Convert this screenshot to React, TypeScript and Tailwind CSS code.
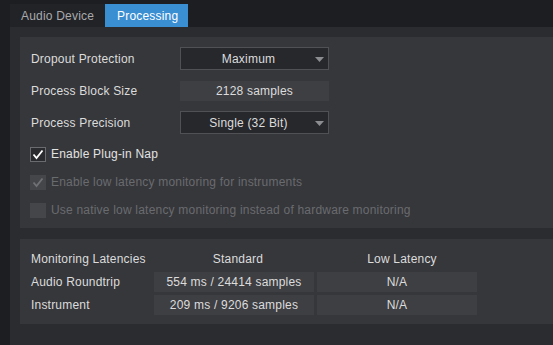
import React from "react";

const font = { fontFamily: '"Liberation Sans", Arial, sans-serif' };

function Arrow() {
  return (
    <svg width="9" height="5" viewBox="0 0 9 5" className="absolute right-[4px] top-[9px]">
      <polygon points="0,0 9,0 4.5,5" fill="#8c8d91" />
    </svg>
  );
}

function Dropdown({ value }: { value: string }) {
  return (
    <div className="relative w-[149px] h-[23px] bg-[#27282c] border border-[#505155] flex items-center justify-center pr-[12px] text-[12px] text-[#dcdcdc]">
      <span>{value}</span>
      <Arrow />
    </div>
  );
}

function Check({ color }: { color: string }) {
  return (
    <svg width="12" height="11" viewBox="0 0 12 11">
      <polyline points="1.5,5.5 4.5,9 10.5,1.5" fill="none" stroke={color} strokeWidth="1.8" />
    </svg>
  );
}

function CheckRow({
  label,
  checked,
  disabled,
}: {
  label: string;
  checked: boolean;
  disabled?: boolean;
}) {
  return (
    <div className="h-[28px] flex items-center pl-[10px]">
      <div
        className={
          disabled
            ? "w-[16px] h-[15px] bg-[#45464a] flex items-center justify-center"
            : "w-[16px] h-[15px] bg-[#2a2b2f] border border-[#6a6b6f] flex items-center justify-center"
        }
      >
        {checked && <Check color={disabled ? "#707175" : "#ffffff"} />}
      </div>
      <span
        className={
          disabled
            ? "ml-[5px] text-[12px] text-[#6a6b6f]"
            : "ml-[5px] text-[12px] text-[#e2e2e2]"
        }
      >
        {label}
      </span>
    </div>
  );
}

export default function App() {
  return (
    <div className="w-[553px] h-[345px] bg-[#1d1e21] overflow-hidden tracking-[0.2px]" style={font}>
      <div className="ml-[10px] h-[345px] flex flex-col">
        <div className="h-[27px] flex items-end">
          <div className="h-[23px] w-[95px] bg-[#222327] flex items-center pl-[11px] text-[12px] text-[#a9aaad]">
            Audio Device
          </div>
          <div className="h-[23px] w-[83px] bg-[#3a8ed2] flex items-center pl-[12px] text-[12px] text-[#ffffff]">
            Processing
          </div>
        </div>
        <div className="flex-1 bg-[#2b2c30] pl-[10px] pt-[10px]">
          <div className="h-[191px] bg-[#36373b] pt-[10px] flex flex-col">
            <div className="h-[23px] flex items-center pl-[11px]">
              <div className="w-[149px] text-[12px] text-[#dcdcdc]">Dropout Protection</div>
              <Dropdown value="Maximum" />
            </div>
            <div className="h-[20px] mt-[11px] flex items-center pl-[11px]">
              <div className="w-[149px] text-[12px] text-[#dcdcdc]">Process Block Size</div>
              <div className="w-[149px] h-[20px] bg-[#3e3f43] flex items-center justify-center text-[12px] text-[#dcdcdc]">
                2128 samples
              </div>
            </div>
            <div className="h-[23px] mt-[10px] flex items-center pl-[11px]">
              <div className="w-[149px] text-[12px] text-[#dcdcdc]">Process Precision</div>
              <Dropdown value="Single (32 Bit)" />
            </div>
            <div className="mt-[6px]">
              <CheckRow label="Enable Plug-in Nap" checked />
              <CheckRow label="Enable low latency monitoring for instruments" checked disabled />
              <CheckRow
                label="Use native low latency monitoring instead of hardware monitoring"
                checked={false}
                disabled
              />
            </div>
          </div>
          <div className="mt-[11px] h-[85px] bg-[#36373b] pt-[10px] pl-[11px] flex flex-col gap-[3px] text-[12px] text-[#dcdcdc]">
            <div className="h-[20px] flex items-center">
              <div className="w-[123px]">Monitoring Latencies</div>
              <div className="w-[160px] text-center pl-[8px]">Standard</div>
              <div className="w-[160px] ml-[3px] text-center pl-[10px]">Low Latency</div>
            </div>
            <div className="h-[20px] flex items-center">
              <div className="w-[123px]">Audio Roundtrip</div>
              <div className="w-[160px] h-[20px] bg-[#3e3f43] flex items-center justify-center">
                554 ms / 24414 samples
              </div>
              <div className="w-[160px] h-[20px] ml-[3px] bg-[#3e3f43] flex items-center justify-center">
                N/A
              </div>
            </div>
            <div className="h-[20px] flex items-center">
              <div className="w-[123px]">Instrument</div>
              <div className="w-[160px] h-[20px] bg-[#3e3f43] flex items-center justify-center">
                209 ms / 9206 samples
              </div>
              <div className="w-[160px] h-[20px] ml-[3px] bg-[#3e3f43] flex items-center justify-center">
                N/A
              </div>
            </div>
          </div>
        </div>
      </div>
    </div>
  );
}
